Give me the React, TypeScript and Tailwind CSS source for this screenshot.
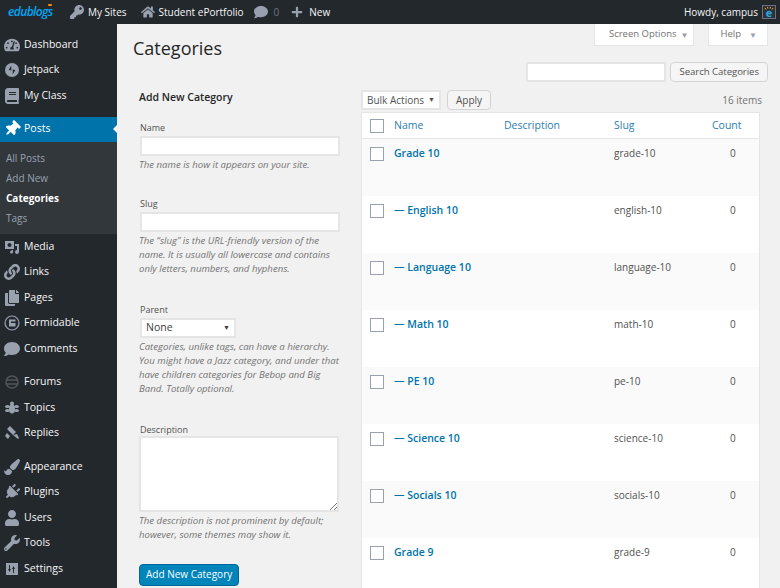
import React from "react";
import {
  FaBook,
  FaComment,
  FaCopy,
  FaHome,
  FaKey,
  FaLink,
  FaPaintBrush,
  FaPlug,
  FaPlus,
  FaTachometerAlt,
  FaThumbtack,
  FaUser,
  FaWrench,
} from "react-icons/fa";

const font = { fontFamily: '"Open Sans", sans-serif' };

const JetpackIcon = () => (
  <svg viewBox="0 0 16 16" className="w-4 h-4" fill="currentColor">
    <circle cx="8" cy="8" r="7" />
    <path d="M7.300 3.500v5l-2.600-.5zM8.700 12.500v-5l2.600.5z" fill="#23282d" />
  </svg>
);

const MediaIcon = () => (
  <svg viewBox="0 0 16 16" className="w-4 h-4" fill="currentColor">
    <path d="M1 2h9v8H1z" />
    <circle cx="5.500" cy="6" r="2" fill="#23282d" />
    <path d="M11 5h4v8a2 2 0 1 1-2-2V7h-2zM6 11h3v2a1.500 1.500 0 1 1-1.500-1.500H8v-.5z" />
  </svg>
);

const FormidableIcon = () => (
  <svg viewBox="0 0 16 16" className="w-4 h-4" fill="none" stroke="currentColor">
    <circle cx="8" cy="8" r="7" strokeWidth="1.200" />
    <path d="M5 4.500h6.500v2H7v1.500h4.500v3.500H5z" fill="currentColor" stroke="none" />
  </svg>
);

const ForumsIcon = () => (
  <svg viewBox="0 0 16 16" className="w-4 h-4" fill="none" stroke="#50555a" strokeWidth="1.500">
    <circle cx="8" cy="8" r="6" />
    <path d="M2 6h12M2 10h12" />
  </svg>
);

const TopicsIcon = () => (
  <svg viewBox="0 0 16 16" className="w-4 h-4" fill="currentColor">
    <ellipse cx="8" cy="9" rx="3" ry="4.500" />
    <circle cx="8" cy="3.500" r="2" />
    <ellipse cx="3.500" cy="6.500" rx="2.500" ry="1.500" />
    <ellipse cx="12.500" cy="6.500" rx="2.500" ry="1.500" />
    <ellipse cx="3.500" cy="10.500" rx="2.500" ry="1.500" />
    <ellipse cx="12.500" cy="10.500" rx="2.500" ry="1.500" />
  </svg>
);

const RepliesIcon = () => (
  <svg viewBox="0 0 16 16" className="w-4 h-4" fill="currentColor">
    <path d="M6 1l6 6-3 3-6-6zM9 10l4-1 2 4-1 1zM3 8l3 3-2 3-3-3z" />
  </svg>
);

const SettingsIcon = () => (
  <svg viewBox="0 0 16 16" className="w-4 h-4" fill="currentColor">
    <path fillRule="evenodd" d="M2 2h12v12H2zM5 4v4H4l1.500 3L7 8H6V4zm5 8V8h1L9.500 5 8 8h1v4z" />
  </svg>
);

const UserTile = () => (
  <svg viewBox="0 0 14 14" className="w-3.5 h-3.5">
    <rect x="0.500" y="0.500" width="13" height="13" fill="#2c3338" stroke="#6b7280" />
    <path d="M3 3l1 1.500M5.500 2l.3 1.500M8.500 2l-.3 1.500M11 3l-1 1.500" stroke="#f5a623" />
    <text x="7" y="12" textAnchor="middle" fontSize="11" fontWeight="700" fill="#29a9e0">e</text>
  </svg>
);

const menuGroups = [
  [
    { label: "Dashboard", icon: <FaTachometerAlt className="w-4 h-4" /> },
    { label: "Jetpack", icon: <JetpackIcon /> },
    { label: "My Class", icon: <FaBook className="w-4 h-4" /> },
  ],
  [
    { label: "Posts", icon: <FaThumbtack className="w-4 h-4 rotate-45" />, current: true },
    { label: "Media", icon: <MediaIcon /> },
    { label: "Links", icon: <FaLink className="w-4 h-4" /> },
    { label: "Pages", icon: <FaCopy className="w-4 h-4" /> },
    { label: "Formidable", icon: <FormidableIcon /> },
    { label: "Comments", icon: <FaComment className="w-4 h-4" /> },
  ],
  [
    { label: "Forums", icon: <ForumsIcon /> },
    { label: "Topics", icon: <TopicsIcon /> },
    { label: "Replies", icon: <RepliesIcon /> },
  ],
  [
    { label: "Appearance", icon: <FaPaintBrush className="w-4 h-4" /> },
    { label: "Plugins", icon: <FaPlug className="w-4 h-4 rotate-45" /> },
    { label: "Users", icon: <FaUser className="w-4 h-4" /> },
    { label: "Tools", icon: <FaWrench className="w-4 h-4" /> },
    { label: "Settings", icon: <SettingsIcon /> },
  ],
];

const categories = [
  { name: "Grade 10", slug: "grade-10" },
  { name: "— English 10", slug: "english-10" },
  { name: "— Language 10", slug: "language-10" },
  { name: "— Math 10", slug: "math-10" },
  { name: "— PE 10", slug: "pe-10" },
  { name: "— Science 10", slug: "science-10" },
  { name: "— Socials 10", slug: "socials-10" },
  { name: "Grade 9", slug: "grade-9" },
];

const TopBar = () => (
  <header className="h-6 shrink-0 bg-[#23282d] flex items-center justify-between pr-1 text-[10px] text-neutral-100">
    <div className="flex items-center">
      <span className="relative w-[70px] pl-2 text-xs font-semibold italic tracking-tighter text-sky-500">
        edublogs
        <span className="absolute left-12 top-0 w-1 h-0.5 rounded-full bg-orange-400" />
      </span>
      <span className="flex items-center gap-1 text-gray-400">
        <FaKey className="w-3.5 h-3.5" />
        <span className="text-neutral-100">My Sites</span>
      </span>
      <span className="flex items-center gap-1 ml-3.5 text-gray-400">
        <FaHome className="w-3.5 h-3.5" />
        <span className="text-neutral-100">Student ePortfolio</span>
      </span>
      <span className="flex items-center gap-1.5 ml-2.5 text-gray-400">
        <FaComment className="w-3.5 h-3.5" />
        <span className="text-gray-500">0</span>
      </span>
      <span className="flex items-center gap-1.5 ml-3 text-gray-400">
        <FaPlus className="w-3 h-3" />
        <span className="text-neutral-100">New</span>
      </span>
    </div>
    <div className="flex items-center gap-1">
      <span>Howdy, campus</span>
      <UserTile />
    </div>
  </header>
);

const Sidebar = () => (
  <aside className="w-[117px] shrink-0 bg-[#23282d] pt-2 flex flex-col text-[10.5px] text-neutral-100">
    {menuGroups.map((group, i) => (
      <div key={i} className={i > 0 ? "mt-2" : ""}>
        {group.map((item) => (
          <div key={item.label}>
            <div
              className={`relative h-[25.5px] flex items-center gap-1 pl-1 ${
                "current" in item ? "bg-[#0073aa] text-white" : "text-neutral-100"
              }`}
            >
              <span className={"current" in item ? "text-white" : "text-gray-400"}>{item.icon}</span>
              <span>{item.label}</span>
              {"current" in item && (
                <span className="absolute right-0 top-2 border-y-4 border-r-4 border-y-transparent border-r-neutral-100" />
              )}
            </div>
            {"current" in item && (
              <ul className="bg-[#32373c] pt-1.5 pb-1.5 pl-1.5 text-[10px] text-gray-400">
                <li className="h-5 flex items-center">All Posts</li>
                <li className="h-5 flex items-center">Add New</li>
                <li className="h-5 flex items-center font-bold text-white">Categories</li>
                <li className="h-5 flex items-center">Tags</li>
              </ul>
            )}
          </div>
        ))}
      </div>
    ))}
  </aside>
);

const Field = ({
  label,
  children,
  help,
  className,
}: {
  label: string;
  children: React.ReactNode;
  help: string;
  className: string;
}) => (
  <div className={className}>
    <label className="block pl-px text-[9px] leading-3 text-neutral-600 mb-0.5">{label}</label>
    {children}
    <p className="mt-0.5 text-[9.6px] italic leading-3.5 text-neutral-500">{help}</p>
  </div>
);

const textInput = "block w-50 ml-px h-5 bg-white border-2 border-neutral-200";

const AddForm = () => (
  <div className="w-52 shrink-0 pl-1.5">
    <h3 className="h-3.5 mb-4.5 text-[10.5px] font-semibold leading-3.5 text-neutral-800">Add New Category</h3>
    <Field className="mb-6.5" label="Name" help="The name is how it appears on your site.">
      <div className={textInput} />
    </Field>
    <Field
      className="mb-7"
      label="Slug"
      help="The “slug” is the URL-friendly version of the name. It is usually all lowercase and contains only letters, numbers, and hyphens."
    >
      <div className={textInput} />
    </Field>
    <Field
      className="mb-7"
      label="Parent"
      help="Categories, unlike tags, can have a hierarchy. You might have a Jazz category, and under that have children categories for Bebop and Big Band. Totally optional."
    >
      <div className="w-24 ml-px h-5 bg-white border-2 border-neutral-200 flex items-center justify-between px-1 text-[10.5px] text-neutral-700">
        <span>None</span>
        <span className="text-[7px]">▼</span>
      </div>
    </Field>
    <Field
      className="mb-4.5"
      label="Description"
      help="The description is not prominent by default; however, some themes may show it."
    >
      <div className="relative w-50 h-19 -mt-0.5 bg-white border-2 border-neutral-200">
        <svg viewBox="0 0 8 8" className="absolute right-0 bottom-0 w-2 h-2" stroke="#555" strokeWidth="0.800">
          <path d="M1 8l7-7M5 8l3-3" />
        </svg>
      </div>
    </Field>
    <button className="h-5.5 px-1.5 bg-[#0085ba] border border-[#006799] rounded-sm text-[10px] text-white">
      Add New Category
    </button>
  </div>
);

const columns = "grid grid-cols-[32px_110px_110px_98px_1fr]";

const CategoryTable = () => (
  <div className="flex-1 ml-5">
    <div className="h-5 flex items-center justify-between pr-1.5 mb-0.5">
      <div className="flex items-center gap-1.5 text-[10px] text-neutral-600">
        <div className="w-20 h-5 bg-white border-2 border-neutral-200 flex items-center justify-between px-1 whitespace-nowrap">
          <span>Bulk Actions</span>
          <span className="text-[7px]">▼</span>
        </div>
        <button className="h-5 px-2 bg-neutral-100 border border-neutral-300 rounded-sm">Apply</button>
      </div>
      <span className="text-[10px] text-neutral-500">16 items</span>
    </div>
    <div className="mr-2 bg-white border border-neutral-200">
      <div className={`${columns} h-6.5 items-center border-b border-neutral-200 text-[10.5px] text-[#2e7eb0]`}>
        <div className="pl-2">
          <div className="w-3.5 h-3.5 border border-gray-400 bg-white" />
        </div>
        <span>Name</span>
        <span>Description</span>
        <span>Slug</span>
        <span>Count</span>
      </div>
      {categories.map((cat, i) => (
        <div
          key={cat.slug}
          className={`${columns} h-[57px] items-start pt-2 leading-3 ${
            i % 2 === 0 ? "bg-neutral-50" : "bg-white"
          }`}
        >
          <div className="pl-2">
            <div className="w-3.5 h-3.5 border border-gray-400 bg-white" />
          </div>
          <span className="text-[10.5px] font-semibold text-[#0073aa]">{cat.name}</span>
          <span />
          <span className="text-[10px] text-neutral-600">{cat.slug}</span>
          <span className="pl-4.5 text-[10px] text-neutral-600">0</span>
        </div>
      ))}
    </div>
  </div>
);

export default function App() {
  return (
    <div className="w-full h-screen overflow-hidden flex flex-col bg-[#f1f1f1]" style={font}>
      <TopBar />
      <div className="flex flex-1 min-h-0">
        <Sidebar />
        <main className="flex-1 min-w-0 pl-4 pr-3">
          <div className="flex items-start justify-between">
            <h1 className="mt-2.5 text-lg text-neutral-800">Categories</h1>
            <div className="flex flex-col items-end">
              <div className="flex gap-3.5 text-[9.5px] text-neutral-500">
                <div className="h-5.5 pl-3.5 pr-1 bg-white border border-neutral-200 border-t-0 flex items-center gap-1">
                  Screen Options <span className="text-[8px] leading-none text-gray-400">▼</span>
                </div>
                <div className="h-5.5 pl-3 pr-2.5 bg-white border border-neutral-200 border-t-0 flex items-center gap-2">
                  Help <span className="text-[8px] leading-none text-gray-400">▼</span>
                </div>
              </div>
              <div className="flex gap-1 mt-4">
                <div className="w-35 h-5 bg-white border-2 border-neutral-200" />
                <button className="h-5 px-2 bg-neutral-100 border border-neutral-300 rounded-sm text-[9.5px] text-neutral-600">
                  Search Categories
                </button>
              </div>
            </div>
          </div>
          <div className="flex mt-2">
            <AddForm />
            <CategoryTable />
          </div>
        </main>
      </div>
    </div>
  );
}
